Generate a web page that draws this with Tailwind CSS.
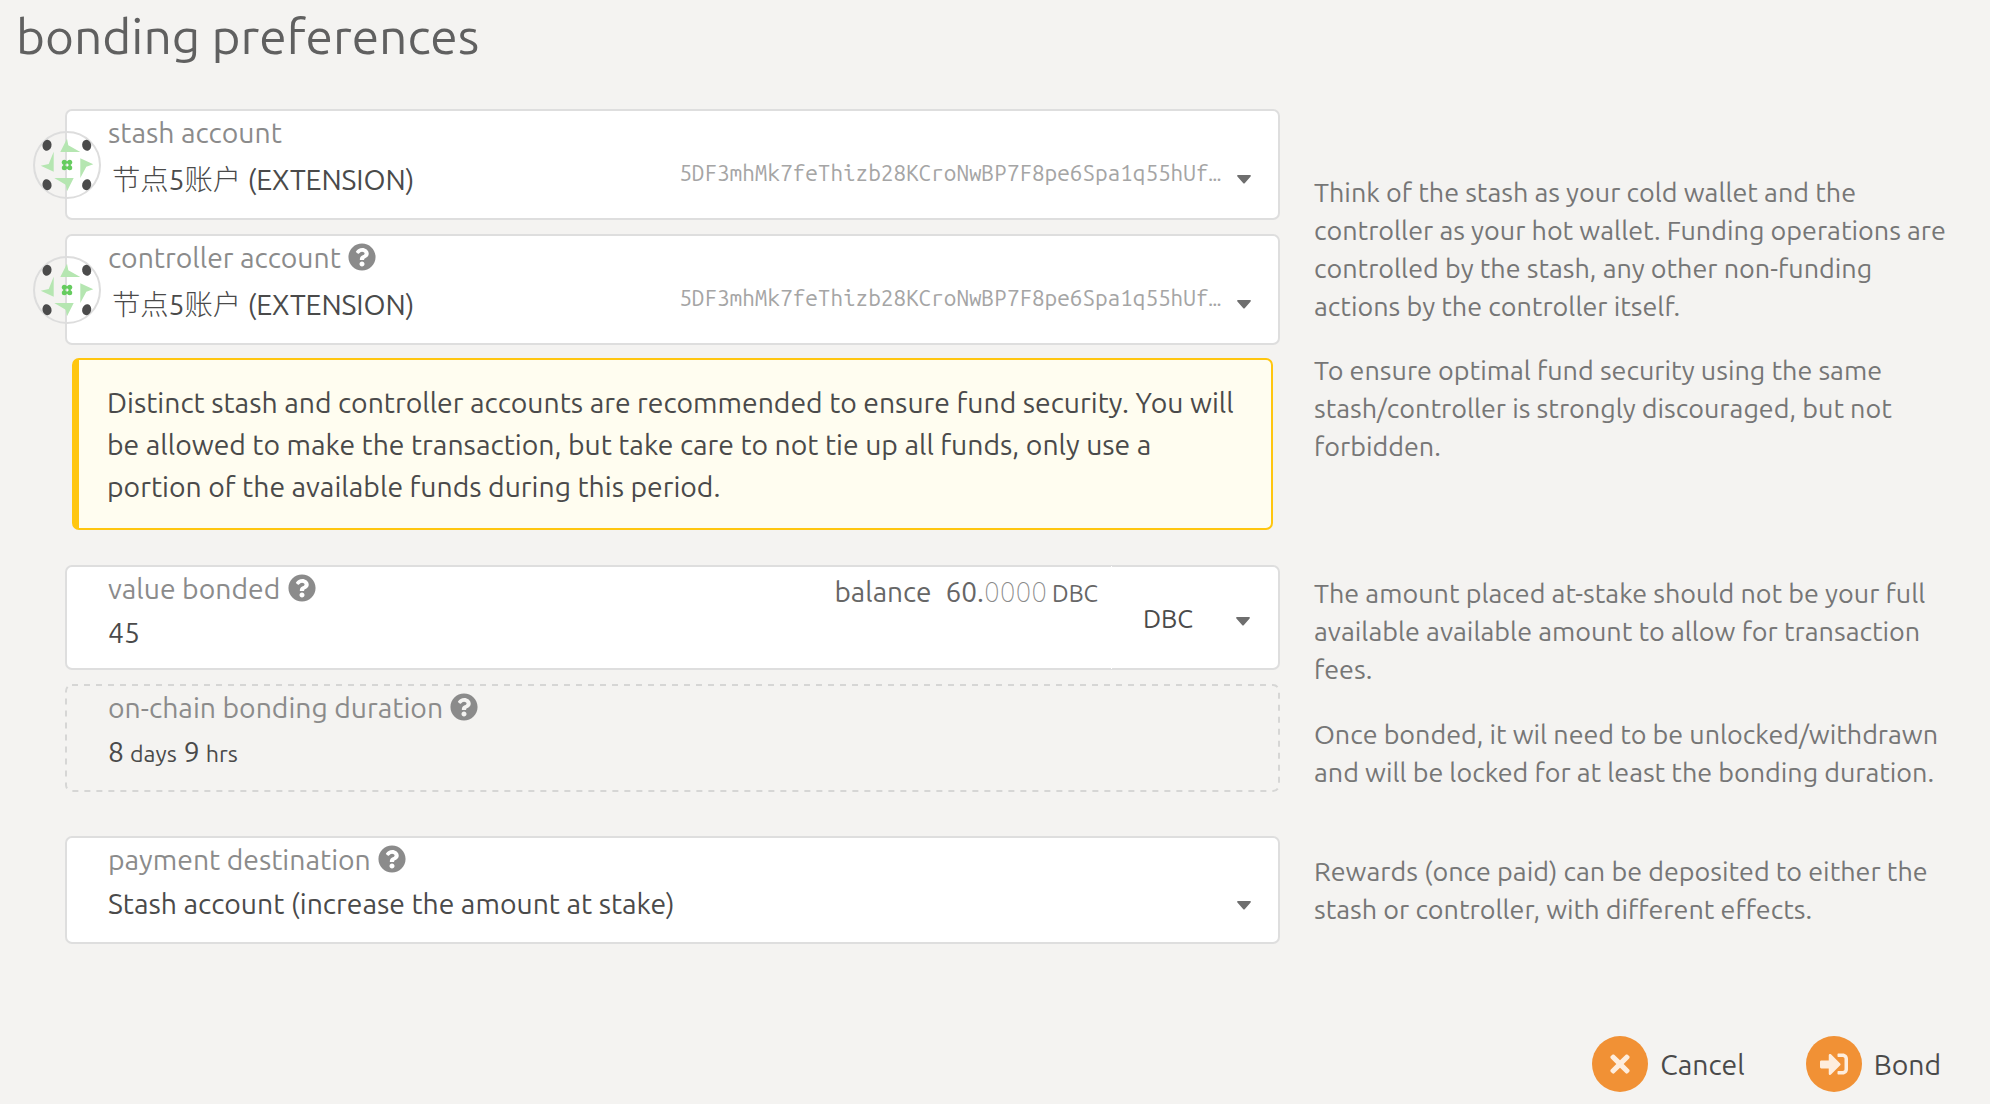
<!DOCTYPE html>
<html lang="en">
<head>
<meta charset="utf-8">
<title>bonding preferences</title>
<script src="https://cdn.jsdelivr.net/npm/@tailwindcss/browser@4"></script>
</head>
<body class="h-[1104px] overflow-hidden bg-[#f4f3f1] font-['Ubuntu','Noto_Sans','Noto_Sans_CJK_SC',sans-serif] text-[28.35px] text-[#4a4a4a]">
<svg class="hidden">
  <symbol id="help" viewBox="0 0 512 512"><path fill="currentColor" d="M504 256c0 136.997-111.043 248-248 248S8 392.997 8 256C8 119.083 119.043 8 256 8s248 111.083 248 248zM262.655 90c-54.497 0-89.255 22.957-116.549 63.758-3.536 5.286-2.353 12.415 2.715 16.258l34.699 26.31c5.205 3.947 12.621 3.008 16.665-2.122 17.864-22.658 30.113-35.797 57.303-35.797 20.429 0 45.698 13.148 45.698 32.958 0 14.976-12.363 22.667-32.534 33.976C247.128 238.528 216 254.941 216 296v4c0 6.627 5.373 12 12 12h56c6.627 0 12-5.373 12-12v-1.333c0-28.462 83.186-29.647 83.186-106.667 0-58.002-60.165-102-116.531-102zM256 338c-25.365 0-46 20.635-46 46 0 25.364 20.635 46 46 46s46-20.636 46-46c0-25.364-20.635-46-46-46z"/></symbol>
  <symbol id="caret" viewBox="0 0 14 9"><path fill="currentColor" d="M1 0h12c.9 0 1.2.8.6 1.400L7.700 8.200c-.4.400-1 .400-1.400 0L.4 1.400C-.2.800.1 0 1 0z"/></symbol>
  <symbol id="identicon" viewBox="0 0 68 68">
    <circle cx="34" cy="34" r="33" fill="none" stroke="#dddddd" stroke-width="2"/>
    <g fill="#4b4b4b">
      <ellipse cx="14" cy="14.300" rx="4.500" ry="5.500" transform="rotate(14 14 14.300)"/>
      <ellipse cx="53.700" cy="14.300" rx="4.500" ry="5.500" transform="rotate(-14 53.700 14.300)"/>
      <ellipse cx="14" cy="53.700" rx="4.500" ry="5.500" transform="rotate(-14 14 53.700)"/>
      <ellipse cx="53.700" cy="53.700" rx="4.500" ry="5.500" transform="rotate(14 53.700 53.700)"/>
    </g>
    <g fill="#b5e6b1">
      <path d="M34 7.700 35.300 14.300 47.300 21H27.300z"/>
      <path d="M34 60.300 32.700 53.700 21.300 47H40.700z"/>
      <path d="M20.700 20.700V40.700L7.700 34.700 15.700 33z"/>
      <path d="M47.300 27.300 60.300 33.300 53.300 35.700 47.300 47z"/>
    </g>
    <g fill="#66cc5f">
      <circle cx="31.300" cy="31.300" r="2.500"/><circle cx="36.700" cy="31.300" r="2.500"/>
      <circle cx="31.300" cy="36.700" r="2.500"/><circle cx="36.700" cy="36.700" r="2.500"/>
      <path fill="none" stroke="#66cc5f" stroke-width="2" d="M31.300 31.300h5.400v5.400h-5.400z"/>
    </g>
  </symbol>
</svg>

<h1 class="h-[109px] pt-[3px] pl-[16px] text-[49.6px] leading-[66px] text-[#606060]">bonding preferences</h1>

<main class="grid grid-cols-[1215px_650px] gap-x-[34px] pl-[65px]">
  <section class="h-[456px]">
    <div class="relative mb-[14px] h-[111px] rounded-[7px] border-2 border-[#dedede] bg-white pt-[6px] pl-[41px]">
      <svg class="absolute top-[20px] -left-[34px] size-[68px]"><use href="#identicon"/></svg>
      <div class="leading-8 text-[#8b8b8b]">stash account</div>
      <div class="mt-[11px] flex h-10 items-center leading-10">
        <span class="ml-[4px] whitespace-nowrap tracking-[-0.08px]"><span class="font-light">节点</span>5<span class="font-light">账户</span> (EXTENSION)</span>
        <span class="mt-[-15px] ml-auto font-['Ubuntu_Mono','DejaVu_Sans_Mono',monospace] text-[22.5px] whitespace-nowrap text-[#a5a5a5]">5DF3mhMk7feThizb28KCroNwBP7F8pe6Spa1q55hUf…</span>
        <svg class="mt-[-1px] mr-[27px] ml-[16px] h-[9px] w-[14px] text-[#6e6e6e]"><use href="#caret"/></svg>
      </div>
    </div>
    <div class="relative mb-[13px] h-[111px] rounded-[7px] border-2 border-[#dedede] bg-white pt-[6px] pl-[41px]">
      <svg class="absolute top-[20px] -left-[34px] size-[68px]"><use href="#identicon"/></svg>
      <div class="flex items-center leading-8 text-[#8b8b8b]">controller account<svg class="-mt-[2px] ml-[7px] size-7"><use href="#help"/></svg></div>
      <div class="mt-[11px] flex h-10 items-center leading-10">
        <span class="ml-[4px] whitespace-nowrap tracking-[-0.08px]"><span class="font-light">节点</span>5<span class="font-light">账户</span> (EXTENSION)</span>
        <span class="mt-[-15px] ml-auto font-['Ubuntu_Mono','DejaVu_Sans_Mono',monospace] text-[22.5px] whitespace-nowrap text-[#a5a5a5]">5DF3mhMk7feThizb28KCroNwBP7F8pe6Spa1q55hUf…</span>
        <svg class="mt-[-1px] mr-[27px] ml-[16px] h-[9px] w-[14px] text-[#6e6e6e]"><use href="#caret"/></svg>
      </div>
    </div>
    <div class="mr-[7px] ml-[7px] h-[172px] rounded-[7px] border-2 border-l-[7px] border-[#ffc60f] bg-[#fffdf0] pt-[22px] pl-[28px] leading-[42px] whitespace-nowrap">
      Distinct stash and controller accounts are recommended to ensure fund security. You will<br>
      be allowed to make the transaction, but take care to not tie up all funds, only use a<br>
      portion of the available funds during this period.
    </div>
  </section>
  <aside class="pt-[64px] text-[26.93px] leading-[38px] whitespace-nowrap text-[#767676]">
    <p class="mb-[26px]">Think of the stash as your cold wallet and the<br>controller as your hot wallet. Funding operations are<br>controlled by the stash, any other non-funding<br>actions by the controller itself.</p>
    <p>To ensure optimal fund security using the same<br>stash/controller is strongly discouraged, but not<br>forbidden.</p>
  </aside>

  <section class="h-[271px]">
    <div class="relative mb-[14px] flex h-[105px] rounded-[7px] border-2 border-[#dedede] bg-white pl-[41px]">
      <div class="absolute -top-[1px] left-[1044px] h-[103px] w-[1px] bg-white"></div>
      <div class="pt-[6px]">
        <div class="flex items-center leading-8 text-[#8b8b8b]">value bonded<svg class="-mt-[2px] ml-[8px] size-7"><use href="#help"/></svg></div>
        <div class="mt-[8px] leading-10">45</div>
      </div>
      <div class="mr-[-1px] ml-auto flex h-8 items-baseline pt-[9px] text-[28px] leading-8 text-[#666666]"><span>balance</span><span class="ml-[14px]">60.</span><span class="font-thin text-[#8a8a8a]">0000</span><span class="ml-[5px] text-[23.5px]">DBC</span></div>
      <div class="flex w-[181px] items-center pt-[4px] pl-[46px] text-[25.6px]">DBC<svg class="mt-[3px] mr-[28px] ml-auto h-[9px] w-[14px] text-[#6e6e6e]"><use href="#caret"/></svg></div>
    </div>
    <div class="relative h-[108px] pt-[8px] pl-[43px]">
      <svg class="absolute inset-0 h-[108px] w-[1215px]"><rect x="1" y="1" width="1213" height="106" rx="6" fill="none" stroke="#d6d6d5" stroke-width="2" stroke-dasharray="6 6"/></svg>
      <div class="flex items-center leading-8 text-[#8b8b8b]">on-chain bonding duration<svg class="-mt-[2px] ml-[7px] size-7"><use href="#help"/></svg></div>
      <div class="mt-[8px] flex items-baseline leading-10">8<span class="ml-[6px] text-[23.2px]">days</span><span class="ml-[7px]">9</span><span class="ml-[6px] text-[23.2px]">hrs</span></div>
    </div>
  </section>
  <aside class="pt-[9px] text-[26.93px] leading-[38px] whitespace-nowrap text-[#767676]">
    <p class="mb-[27px]">The amount placed at-stake should not be your full<br>available available amount to allow for transaction<br>fees.</p>
    <p class="tracking-[-0.02px]">Once bonded, it wil need to be unlocked/withdrawn<br>and will be locked for at least the bonding duration.</p>
  </aside>

  <section class="h-[200px]">
    <div class="h-[108px] rounded-[7px] border-2 border-[#dedede] bg-white pt-[6px] pl-[41px]">
      <div class="flex items-center leading-8 text-[#8b8b8b]">payment destination<svg class="-mt-[2px] ml-[7px] size-7"><use href="#help"/></svg></div>
      <div class="mt-[8px] flex items-center leading-10">Stash account (increase the amount at stake)<svg class="mt-[3px] mr-[27px] ml-auto h-[9px] w-[14px] text-[#6e6e6e]"><use href="#caret"/></svg></div>
    </div>
  </section>
  <aside class="pt-[16px] text-[26.93px] leading-[38px] whitespace-nowrap text-[#767676]">
    <p>Rewards (once paid) can be deposited to either the<br>stash or controller, with different effects.</p>
  </aside>
</main>

<footer class="flex items-center justify-end gap-[61px] pr-[49px]">
  <button class="flex items-center gap-[12px]"><span class="flex size-14 items-center justify-center rounded-full bg-[#f19135] text-[#feeddd]"><svg class="h-7 w-[20px]" viewBox="0 0 352 512"><path fill="currentColor" d="M242.720 256l100.070-100.070c12.280-12.280 12.280-32.190 0-44.480l-22.240-22.240c-12.280-12.280-32.190-12.280-44.480 0L176 189.280 75.930 89.210c-12.280-12.280-32.190-12.280-44.480 0L9.210 111.450c-12.280 12.280-12.280 32.190 0 44.480L109.280 256 9.210 356.070c-12.280 12.280-12.280 32.190 0 44.480l22.240 22.240c12.280 12.280 32.200 12.280 44.480 0L176 322.720l100.070 100.070c12.280 12.280 32.200 12.280 44.480 0l22.240-22.240c12.280-12.280 12.280-32.190 0-44.480L242.720 256z"/></svg></span><span class="pt-[2px]">Cancel</span></button>
  <button class="flex items-center gap-[12px]"><span class="flex size-14 items-center justify-center rounded-full bg-[#f19135] text-[#feeddd]"><svg class="size-7" viewBox="0 0 512 512"><path fill="currentColor" d="M416 448h-84c-6.600 0-12-5.400-12-12v-40c0-6.600 5.400-12 12-12h84c17.700 0 32-14.300 32-32V160c0-17.700-14.300-32-32-32h-84c-6.600 0-12-5.400-12-12V76c0-6.600 5.400-12 12-12h84c53 0 96 43 96 96v192c0 53-43 96-96 96zm-47-201L201 79c-15-15-41-4.500-41 17v96H24c-13.300 0-24 10.700-24 24v96c0 13.300 10.700 24 24 24h136v96c0 21.500 26 32 41 17l168-168c9.300-9.400 9.300-24.600 0-34z"/></svg></span><span class="pt-[2px]">Bond</span></button>
</footer>
</body>
</html>
